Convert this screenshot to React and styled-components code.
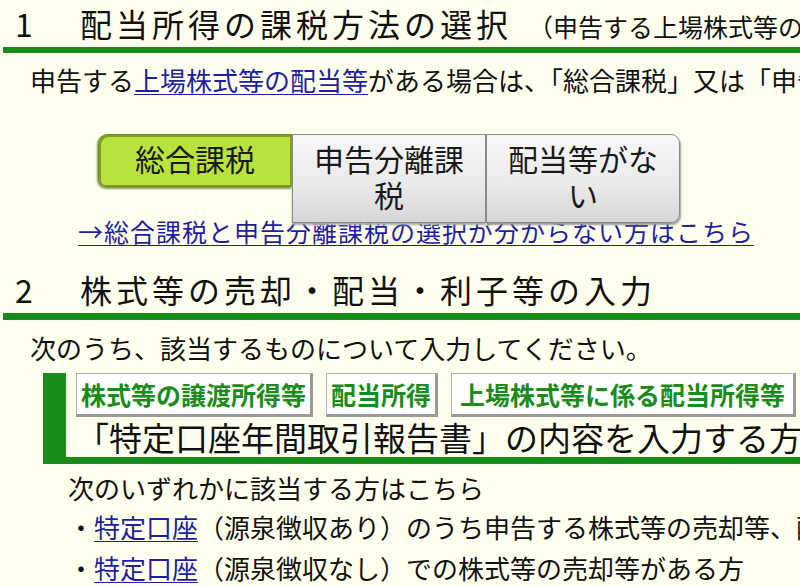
import styled, { createGlobalStyle } from "styled-components";

const GlobalStyle = createGlobalStyle`
  html, body {
    margin: 0;
    padding: 0;
    background: #ffffee;
    overflow: hidden;
  }
  body {
    font-family: "Noto Sans CJK JP", "Noto Sans", sans-serif;
    color: #111;
  }
`;

const Page = styled.div`
  width: 800px;
  height: 586px;
  overflow: hidden;
  white-space: nowrap;
`;

const Heading = styled.h2`
  margin: ${(p) => p.$top || 0}px 0 0 3px;
  padding-left: 12px;
  height: 47px;
  line-height: 46px;
  font-size: 32px;
  font-weight: normal;
  letter-spacing: 4px;
  border-bottom: ${(p) => p.$bar || 6}px solid #1a8c1a;
  overflow: hidden;
`;

const Num = styled.span`
  display: inline-block;
  width: 65px;
`;

const Sub = styled.span`
  margin-left: 16px;
  font-size: 25px;
  letter-spacing: 0;
`;

const Text = styled.p`
  margin: ${(p) => p.$top || 0}px 0 0 ${(p) => p.$left || 30}px;
  font-size: 26px;
  line-height: 36px;
`;

const A = styled.a`
  color: #1f1f9e;
  text-decoration: underline;
  text-underline-offset: 3px;
  text-decoration-thickness: 1px;
`;

const Choices = styled.div`
  display: flex;
  align-items: flex-start;
  height: 80px;
  margin: 36px 0 0 98px;
`;

const Choice = styled.button`
  box-sizing: border-box;
  width: 194px;
  padding: 5px 10px 10px;
  font-family: inherit;
  font-size: 30px;
  line-height: 36px;
  color: #1a1a1a;
  white-space: normal;
  text-align: center;
  cursor: pointer;
  position: relative;
  border: 1px solid ${(p) => (p.$active ? "#6e8c1c" : "#8a8a8a")};
  background: ${(p) =>
    p.$active
      ? "#b8e23c"
      : "linear-gradient(#f7f7f7, #e9e9e9 60%, #d6d6d6)"};
  border-radius: ${(p) =>
    p.$first ? "9px 0 0 9px" : p.$last ? "0 9px 9px 0" : "0"};
  box-shadow: ${(p) =>
    p.$active
      ? "inset 2px 2px 0 #7e9e24, inset -1px -1px 0 #7e9e24, -1px 2px 2px #8a9a5a"
      : p.$last
      ? "1px 2px 2px #9a9a9a"
      : "0 2px 2px #aaa"};
`;

const LinkLine = styled.p`
  margin: 0 0 0 78px;
  font-size: 25px;
  letter-spacing: 1px;
  line-height: 34px;
`;

const Panel = styled.div`
  margin: 10px 0 0 43px;
  padding-left: 10px;
  border-left: 23px solid #1a8c1a;
  border-bottom: 7px solid #1a8c1a;
`;

const Tabs = styled.div`
  display: flex;
  gap: 13px;
  margin-top: -3px;
`;

const Tab = styled.a`
  display: block;
  padding: 1px ${(p) => p.$pad || 4}px 0;
  background: #fff;
  border: 1px solid #b0b0b0;
  border-right: 3px solid #9a9a9a;
  border-bottom: 3px solid #9a9a9a;
  color: #1a8c1a;
  font-size: 25px;
  font-weight: bold;
  line-height: 39px;
  text-decoration: none;
`;

const PanelTitle = styled.div`
  font-size: 33px;
  line-height: 40px;
`;

const List = styled.ul`
  margin: 0 0 0 68px;
  padding: 0;
  list-style: none;
  font-size: 26px;
  line-height: 41px;
`;

export default function App() {
  return (
    <Page>
      <GlobalStyle />
      <Heading>
        <Num>1</Num>配当所得の課税方法の選択
        <Sub>（申告する上場株式等の配当等がある場合）</Sub>
      </Heading>
      <Text $top={9}>
        申告する<A href="#">上場株式等の配当等</A>
        がある場合は、「総合課税」又は「申告分離課税」のいずれかを選択してください。
      </Text>
      <Choices>
        <Choice $active $first>
          総合課税
        </Choice>
        <Choice>申告分離課税</Choice>
        <Choice $last>配当等がない</Choice>
      </Choices>
      <LinkLine>
        <A href="#">→総合課税と申告分離課税の選択が分からない方はこちら</A>
      </LinkLine>
      <Heading $top={18} $bar={7}>
        <Num>2</Num>株式等の売却・配当・利子等の入力
      </Heading>
      <Text $top={10}>次のうち、該当するものについて入力してください。</Text>
      <Panel>
        <Tabs>
          <Tab href="#">株式等の譲渡所得等</Tab>
          <Tab href="#">配当所得</Tab>
          <Tab href="#" $pad={8}>
            上場株式等に係る配当所得等
          </Tab>
        </Tabs>
        <PanelTitle>「特定口座年間取引報告書」の内容を入力する方</PanelTitle>
      </Panel>
      <List>
        <li style={{ lineHeight: "36px", marginTop: 6 }}>
          次のいずれかに該当する方はこちら
        </li>
        <li>
          ・<A href="#">特定口座</A>
          （源泉徴収あり）のうち申告する株式等の売却等、配当等がある方
        </li>
        <li>
          ・<A href="#">特定口座</A>（源泉徴収なし）での株式等の売却等がある方
        </li>
      </List>
    </Page>
  );
}
